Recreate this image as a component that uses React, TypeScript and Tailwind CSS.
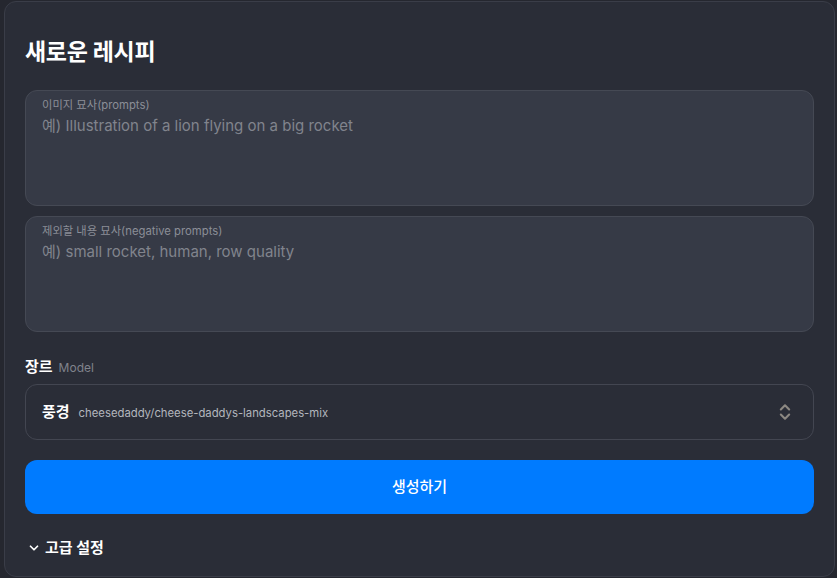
import { ChevronDown, ChevronsUpDown } from "lucide-react";

const font = {
  fontFamily: '"Inter", "Noto Sans CJK KR", sans-serif',
};

const PromptBox = ({ label, placeholder }: { label: string; placeholder: string }) => (
  <div className="h-[116px] rounded-xl border border-[#454954] bg-[#363a46] px-4 pt-[6px]">
    <div className="text-[11.3px] leading-[17px] text-[#8b8e97]">{label}</div>
    <div className="text-[15px] leading-[24px] text-[#81848d]">{placeholder}</div>
  </div>
);

export default function App() {
  return (
    <div className="h-[578px] w-[837px] bg-[#25272f] pl-1 pr-[2px] pt-px" style={font}>
      <div className="h-[576px] rounded-xl border border-[#3a3d48] bg-[#2a2d37] px-5 pt-[35px]">
        <h1 className="text-[23px] font-bold leading-[30px] tracking-[-0.3px] text-white">새로운 레시피</h1>

        <div className="mt-[23px] flex flex-col gap-[10px]">
          <PromptBox label="이미지 묘사(prompts)" placeholder="예) Illustration of a lion flying on a big rocket" />
          <PromptBox label="제외할 내용 묘사(negative prompts)" placeholder="예) small rocket, human, row quality" />
        </div>

        <div className="mt-[25px] flex items-baseline gap-[6px]">
          <span className="text-[15px] font-bold leading-[20px] text-white">장르</span>
          <span className="text-[12px] text-[#80838c]">Model</span>
        </div>

        <div className="mt-[7px] flex h-[56px] items-center justify-between rounded-xl border border-[#434651] pl-4 pr-[18px]">
          <div className="flex items-baseline gap-[9px]">
            <span className="text-[15px] font-bold text-white">풍경</span>
            <span className="text-[11.3px] text-[#b3b6bd]">cheesedaddy/cheese-daddys-landscapes-mix</span>
          </div>
          <ChevronsUpDown className="h-5 w-5 text-[#8c8882]" strokeWidth={2.5} />
        </div>

        <button className="mt-[20px] flex h-[54px] w-full items-center justify-center rounded-xl bg-[#007bff] text-[15px] font-medium text-white">
          생성하기
        </button>

        <div className="mt-[23px] flex items-center gap-[4px] pl-[2px]">
          <ChevronDown className="h-[14px] w-[14px] text-white" strokeWidth={3} />
          <span className="text-[15px] font-bold text-white">고급 설정</span>
        </div>
      </div>
    </div>
  );
}
